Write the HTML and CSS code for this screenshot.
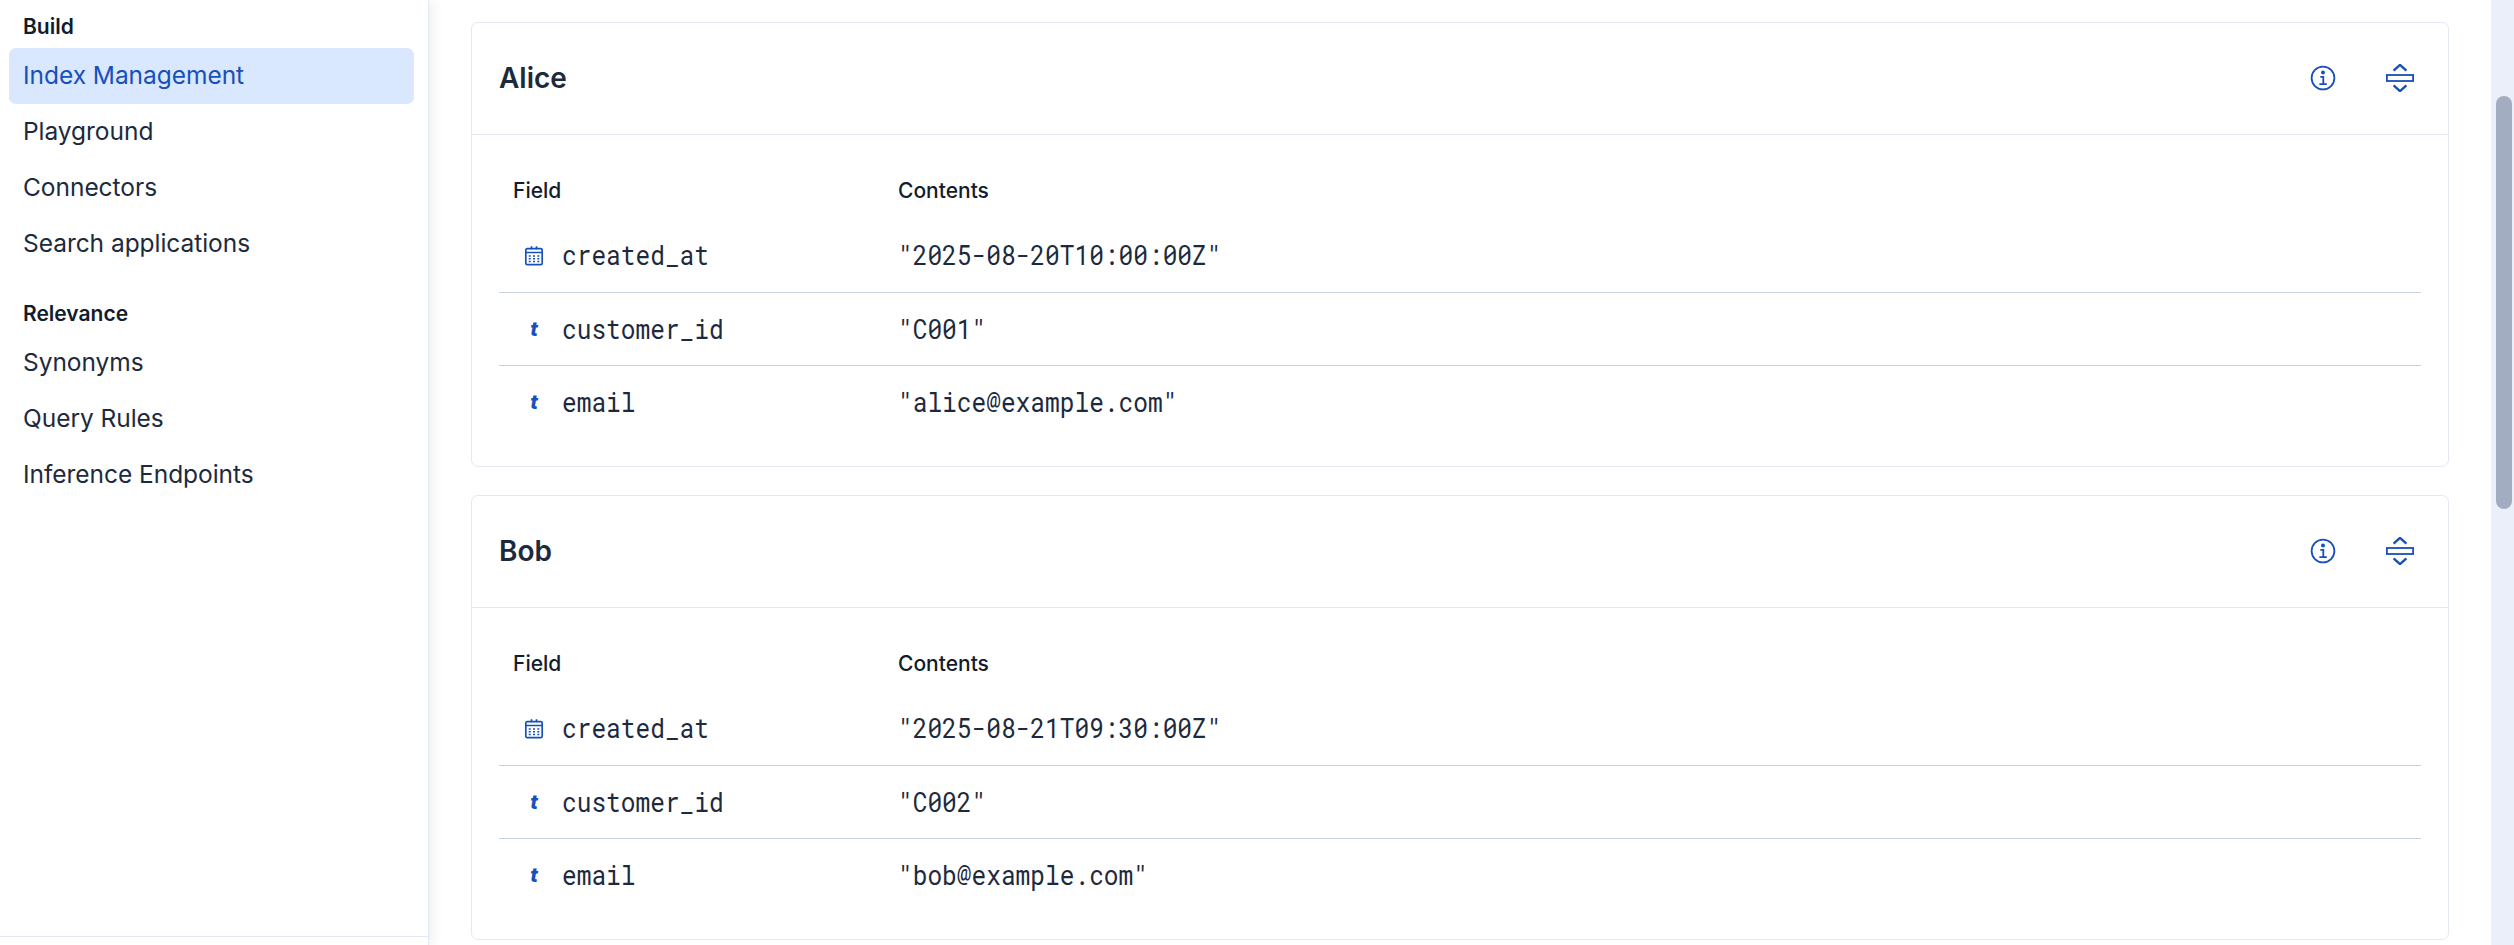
FILE: index.html
```html
<!DOCTYPE html>
<html lang="en">
<head>
    <meta charset="UTF-8">
    <meta name="viewport" content="width=device-width, initial-scale=1.0">
    <title>Index Management</title>
    <link rel="stylesheet" href="styles.css">
</head>
<body>
    <!-- Shared icons -->
    <svg class="sprite">
        <symbol id="icon-info" viewBox="0 0 28 28">
            <circle cx="14" cy="14" r="11.4" fill="none" stroke="currentColor" stroke-width="1.8"/>
            <circle cx="14" cy="8.6" r="2" fill="currentColor"/>
            <path d="M11.3 12.8h3v7.4M10.4 20.2h7.4" fill="none" stroke="currentColor" stroke-width="1.8"/>
        </symbol>
        <symbol id="icon-expand" viewBox="0 0 28 28">
            <path d="M7.6 6.6L14 .9l6.4 5.7M7.6 21.4l6.4 5.7 6.4-5.7" fill="none" stroke="currentColor" stroke-width="2.4"/>
            <rect x=".9" y="11" width="26.2" height="6" fill="none" stroke="currentColor" stroke-width="1.8"/>
        </symbol>
        <symbol id="icon-date" viewBox="0 0 20 20">
            <rect x="1.8" y="2.7" width="16.4" height="16" rx="1.5" fill="none" stroke="currentColor" stroke-width="1.7"/>
            <path d="M1.7 6.5h16.6M7.5.3v3M12.5.3v3" fill="none" stroke="currentColor" stroke-width="1.7"/>
            <path d="M4.7 10h2M9 10h2M13.3 10h2M4.7 12.8h2M9 12.8h2M13.3 12.8h2M4.7 15.6h2M9 15.6h2M13.3 15.6h2" stroke="currentColor" stroke-width="1.5"/>
        </symbol>
    </svg>

    <nav class="sidebar">
        <div class="nav">
            <h2 class="nav-title">Build</h2>
            <a class="nav-item active">Index Management</a>
            <a class="nav-item">Playground</a>
            <a class="nav-item">Connectors</a>
            <a class="nav-item">Search applications</a>
            <h2 class="nav-title">Relevance</h2>
            <a class="nav-item">Synonyms</a>
            <a class="nav-item">Query Rules</a>
            <a class="nav-item">Inference Endpoints</a>
        </div>
        <div class="sidebar-footer"></div>
    </nav>

    <main class="content">
        <section class="card">
            <header class="card-header">
                <h3>Alice</h3>
                <div class="actions">
                    <svg class="icon"><use href="#icon-info"/></svg>
                    <svg class="icon"><use href="#icon-expand"/></svg>
                </div>
            </header>
            <div class="fields">
                <div class="row head"><span>Field</span><span>Contents</span></div>
                <div class="row">
                    <span class="field"><svg class="type"><use href="#icon-date"/></svg><code>created_at</code></span>
                    <code>"2025-08-20T10:00:00Z"</code>
                </div>
                <div class="row">
                    <span class="field"><i class="type">t</i><code>customer_id</code></span>
                    <code>"C001"</code>
                </div>
                <div class="row">
                    <span class="field"><i class="type">t</i><code>email</code></span>
                    <code>"alice@example.com"</code>
                </div>
            </div>
        </section>

        <section class="card">
            <header class="card-header">
                <h3>Bob</h3>
                <div class="actions">
                    <svg class="icon"><use href="#icon-info"/></svg>
                    <svg class="icon"><use href="#icon-expand"/></svg>
                </div>
            </header>
            <div class="fields">
                <div class="row head"><span>Field</span><span>Contents</span></div>
                <div class="row">
                    <span class="field"><svg class="type"><use href="#icon-date"/></svg><code>created_at</code></span>
                    <code>"2025-08-21T09:30:00Z"</code>
                </div>
                <div class="row">
                    <span class="field"><i class="type">t</i><code>customer_id</code></span>
                    <code>"C002"</code>
                </div>
                <div class="row">
                    <span class="field"><i class="type">t</i><code>email</code></span>
                    <code>"bob@example.com"</code>
                </div>
            </div>
        </section>
    </main>

    <div class="scrollbar"><div class="thumb"></div></div>
</body>
</html>
```
FILE: styles.css
```css
* {
    box-sizing: border-box;
}
body {
    margin: 0;
    display: flex;
    height: 100vh;
    overflow: hidden;
    background: #fff;
    color: #1d2a3e;
    font-family: Inter, sans-serif;
    font-size: 24.5px;
}
h2, h3 {
    margin: 0;
    font-weight: 600;
}
.sprite {
    display: none;
}

/* Sidebar */
.sidebar {
    display: flex;
    flex-direction: column;
    justify-content: space-between;
    width: 429px;
    border-right: 1px solid #e3e8f2;
    box-shadow: 2px 0 12px rgba(43, 57, 79, 0.1);
}
.nav {
    padding: 6px 14px 0 9px;
}
.nav-title {
    height: 42px;
    padding-left: 14px;
    line-height: 42px;
    font-size: 21px;
    color: #111c2c;
}
.nav-item + .nav-title {
    margin-top: 21px;
}
.nav-item {
    display: block;
    height: 56px;
    padding-left: 14px;
    line-height: 55px;
    border-radius: 7px;
    letter-spacing: -0.04px;
}
.nav-item.active {
    background: #d9e8ff;
    color: #1750ba;
}
.sidebar-footer {
    height: 9px;
    border-top: 1px solid #e3e8f2;
}

/* Document cards */
.content {
    flex: 1;
    display: flex;
    flex-direction: column;
    gap: 28px;
    padding: 22px 42px 0 42px;
}
.card {
    height: 445px;
    border: 1px solid #e3e8f2;
    border-radius: 7px;
}
.card-header {
    display: flex;
    align-items: center;
    justify-content: space-between;
    height: 112px;
    padding: 0 34px 2px 27px;
    border-bottom: 1px solid #e3e8f2;
}
.card-header h3 {
    font-size: 28px;
}
.actions {
    display: flex;
    gap: 49px;
    color: #1750ba;
}
.icon {
    width: 28px;
    height: 28px;
}
.fields {
    padding: 28px 27px;
}
.row {
    display: grid;
    grid-template-columns: 385px 1fr;
    align-items: center;
    height: 73px;
    padding-left: 14px;
}
.row + .row + .row {
    border-top: 1px solid #cad3e2;
}
.row.head {
    height: 56px;
    padding-bottom: 1px;
    font-size: 21px;
    font-weight: 500;
    color: #111c2c;
}
.field {
    display: flex;
    align-items: center;
    gap: 18px;
    padding-left: 11px;
}
code {
    font-family: "Roboto Mono", "Liberation Mono", monospace;
    font-size: 24.5px;
    transform: translateY(-1px) scaleY(1.1);
}
.type {
    width: 20px;
    height: 20px;
    color: #1750ba;
    font: italic 800 20px/20px Inter, sans-serif;
    text-align: center;
}

/* Page scrollbar */
.scrollbar {
    width: 23px;
    padding: 96px 2px 0 5px;
    background: #ebeff9;
}
.thumb {
    height: 413px;
    border-radius: 8px;
    background: #a2adc1;
}
```
